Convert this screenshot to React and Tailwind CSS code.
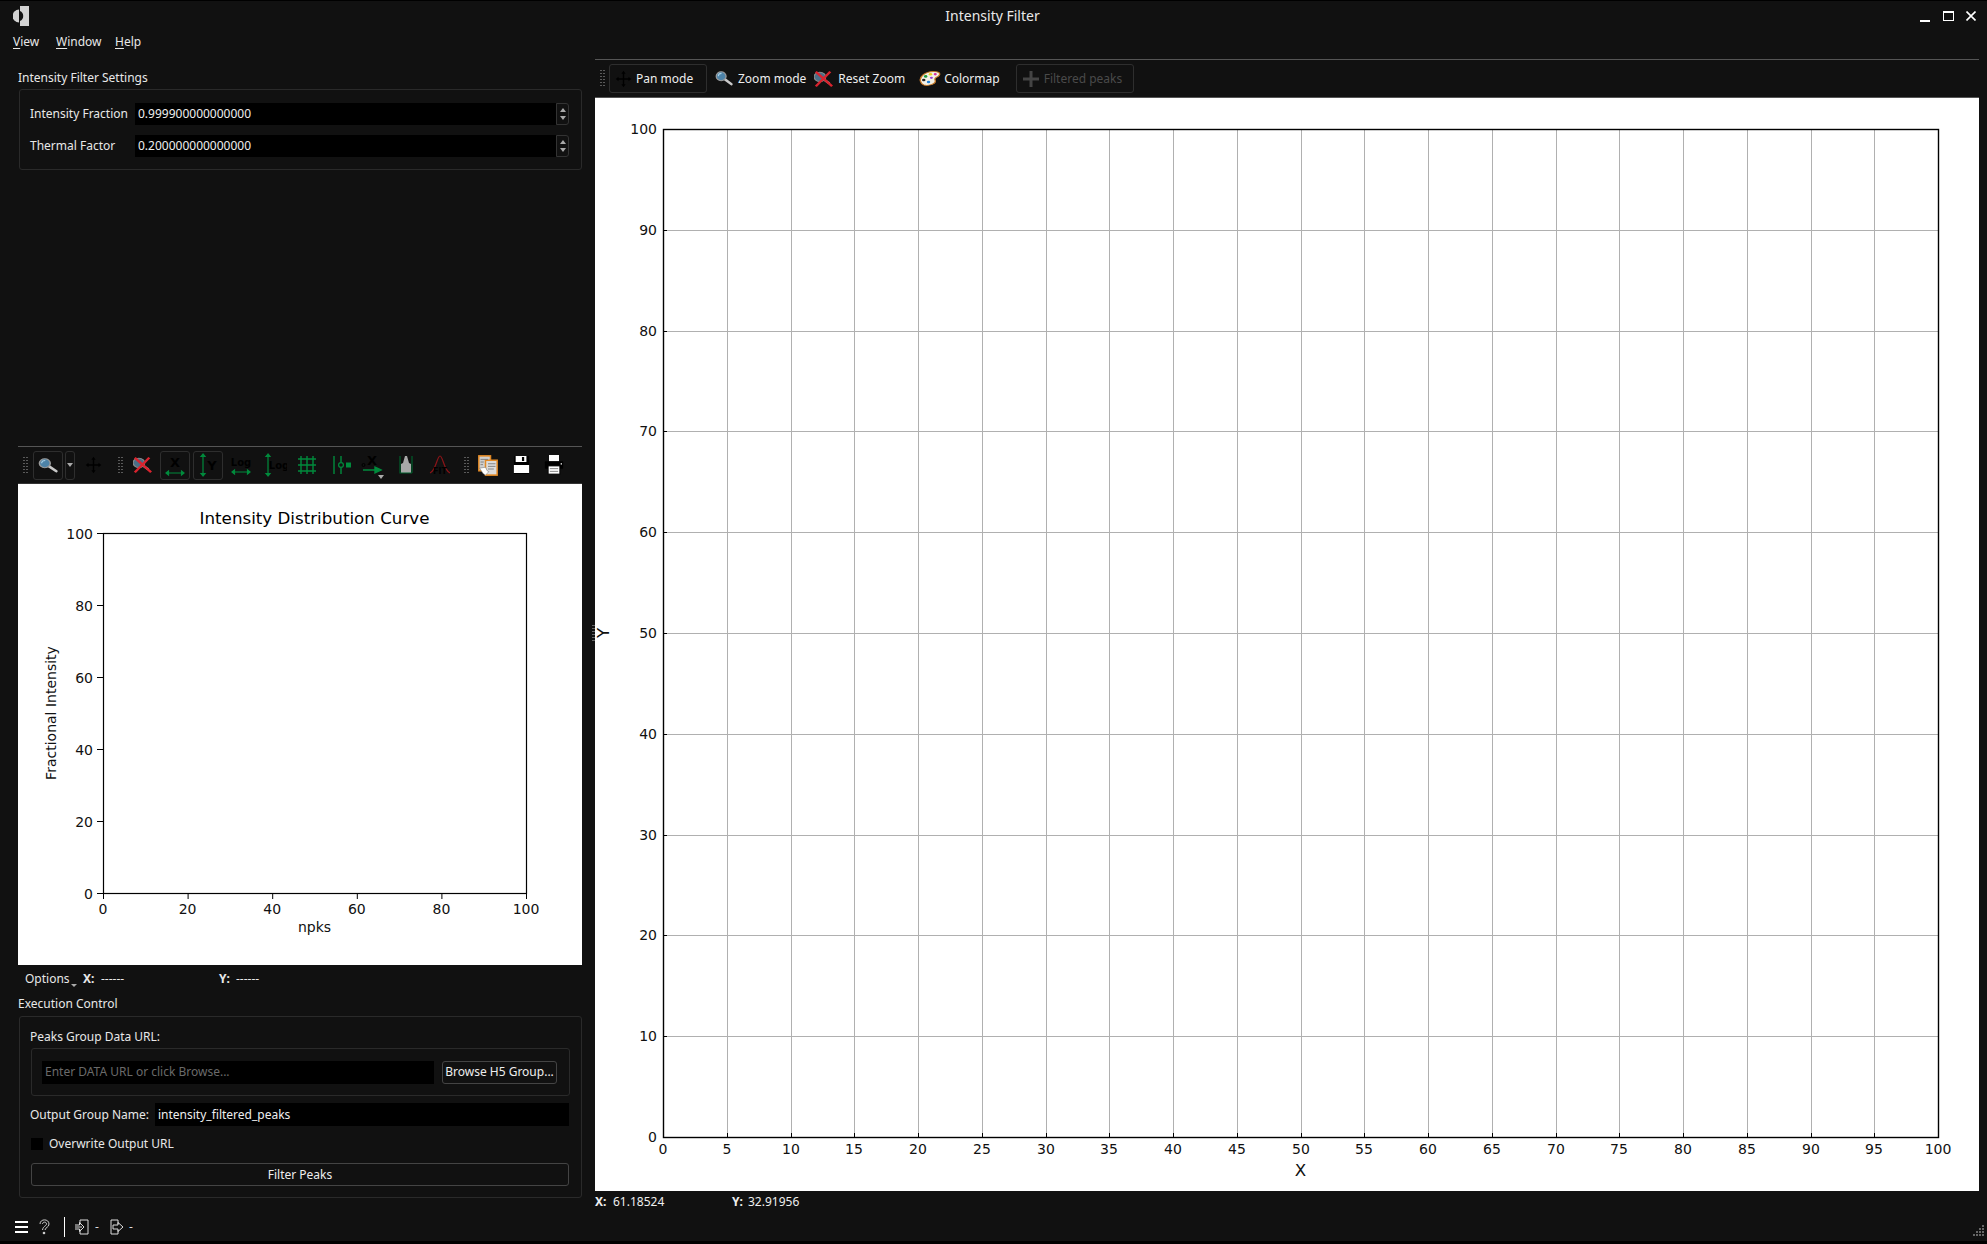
import React from "react";

const G = "#008a3c";

function Grip({ className = "" }) {
  return (
    <div className={"grid grid-cols-2 gap-px w-[5px] shrink-0 " + className}>
      {Array.from({ length: 12 }).map((_, i) => (
        <div key={i} className="w-[2px] h-[1px] mb-[1px] bg-[#5a5a5a]" />
      ))}
    </div>
  );
}

function Svg({ w = 24, h = 24, vb = "0 0 24 24", children }) {
  return (
    <svg width={w} height={h} viewBox={vb} preserveAspectRatio="none" className="block shrink-0">
      {children}
    </svg>
  );
}

function Lens() {
  return (
    <>
      <path d="M13 12 L21 18.5" stroke="#c9c9c9" strokeWidth="3.2" strokeLinecap="round" />
      <circle cx="8.5" cy="8" r="6" fill="#4d83a8" stroke="#9a9a9a" strokeWidth="1.6" />
      <path d="M5 8 A4 4 0 0 1 9 4.2" stroke="#a9d0e6" strokeWidth="1.4" fill="none" />
    </>
  );
}

const Magnifier = ({ w = 20, h = 15 }) => (
  <Svg w={w} h={h} vb="1 1 22 20">
    <Lens />
  </Svg>
);

const ResetZoom = ({ w = 19, h = 16 }) => (
  <Svg w={w} h={h} vb="2 1 21 22">
    <path d="M12 12 L19 18" stroke="#9a9a9a" strokeWidth="3" />
    <circle cx="8.5" cy="9" r="6.4" fill="#4a6f88" stroke="#8a8a8a" strokeWidth="1.4" />
    <path d="M4 2 L22 22 M20 2 L4 22" stroke="#d9232e" strokeWidth="2.8" />
  </Svg>
);

const Pan = ({ w = 17, h = 18 }) => (
  <Svg w={w} h={h}>
    <path d="M12 1 L15 5 H13 V11 H19 V9 L23 12 L19 15 V13 H13 V19 H15 L12 23 L9 19 H11 V13 H5 V15 L1 12 L5 9 V11 H11 V5 H9 Z" fill="#000" />
  </Svg>
);

const Palette = () => (
  <Svg w={23} h={17}>
    <path d="M3 17 C0 10 8 2 16 2 C23 2 24 6 21 9 C18 11 17 12 18 15 C19 20 10 23 6 21 C4.5 20 3.5 19 3 17 Z" fill="#f4f1e6" stroke="#c87a28" strokeWidth="1.4" />
    <circle cx="8" cy="9" r="1.8" fill="#1d9a3c" />
    <circle cx="13" cy="6" r="1.8" fill="#e8d21f" />
    <circle cx="18" cy="6" r="1.6" fill="#d32ea0" />
    <circle cx="6" cy="14" r="1.8" fill="#222" />
    <circle cx="11" cy="17" r="1.8" fill="#1f7fd6" />
    <circle cx="14" cy="11" r="1.6" fill="#9a3fd0" />
  </Svg>
);

const ArrowH = ({ y = 19, x1 = 3, x2 = 21 }) => (
  <path d={`M${x1} ${y} H${x2} M${x1} ${y} l2.5 -2 v4 Z M${x2} ${y} l-2.5 -2 v4 Z`} stroke={G} fill={G} strokeWidth="1.2" />
);
const ArrowV = ({ x = 8, y1 = 1, y2 = 23 }) => (
  <path d={`M${x} ${y1} V${y2} M${x} ${y1} l-2 2.5 h4 Z M${x} ${y2} l-2 -2.5 h4 Z`} stroke={G} fill={G} strokeWidth="1.2" />
);

const IconX = () => (
  <Svg w={24} h={24}>
    <text x="12" y="14" textAnchor="middle" className="font-['DejaVu_Sans'] font-bold text-[13px]" fill="#000">X</text>
    <ArrowH y={20} />
  </Svg>
);
const IconY = () => (
  <Svg w={24} h={24}>
    <ArrowV x={7} />
    <text x="16" y="17" textAnchor="middle" className="font-['DejaVu_Sans'] font-bold text-[13px]" fill="#000">Y</text>
  </Svg>
);
const IconLogX = () => (
  <Svg w={24} h={24}>
    <text x="12" y="13" textAnchor="middle" className="font-['DejaVu_Sans'] font-bold text-[10px]" fill="#000">Log</text>
    <ArrowH y={19} />
  </Svg>
);
const IconLogY = () => (
  <Svg w={24} h={24}>
    <ArrowV x={5} />
    <text x="16" y="16" textAnchor="middle" className="font-['DejaVu_Sans'] font-bold text-[10px]" fill="#000">Log</text>
  </Svg>
);
const IconGrid = () => (
  <Svg w={24} h={24}>
    <path d="M6 3 V21 M12 3 V21 M18 3 V21 M3 6 H21 M3 12 H21 M3 18 H21" stroke={G} strokeWidth="1.4" />
  </Svg>
);
const IconCurve = () => (
  <Svg w={24} h={24}>
    <path d="M4 3 V21 M11 3 V9 M11 15 V21" stroke={G} strokeWidth="1.4" />
    <circle cx="11" cy="12" r="2.4" fill="none" stroke={G} strokeWidth="1.2" />
    <rect x="16" y="9.5" width="5" height="5" fill={G} />
  </Svg>
);
const IconXArrow = () => (
  <div className="relative">
    <Svg w={24} h={24}>
      <circle cx="3.5" cy="12" r="1.5" fill="none" stroke="#000" />
      <text x="12" y="12" textAnchor="middle" className="font-['DejaVu_Sans'] font-bold text-[13px]" fill="#000">X</text>
      <path d="M3 17 H16 M21 17 L15 14.2 V19.8 Z" stroke={G} fill={G} strokeWidth="1.4" />
    </Svg>
    <div className="absolute left-[18px] top-[22px] w-0 h-0 border-l-[3px] border-r-[3px] border-t-[4px] border-l-transparent border-r-transparent border-t-[#aaa]" />
  </div>
);
const IconHist = () => (
  <Svg w={24} h={24}>
    <path d="M7 20 L7 11 L9 10 L11 3 L13 3 L15 10 L17 11 L17 20 Z" fill="#a8a8a8" />
    <path d="M6 3 V20 H18 M18 3 V20" stroke="#005f2c" strokeWidth="1.2" fill="none" />
  </Svg>
);
const IconFit = () => (
  <Svg w={24} h={24}>
    <path d="M2 20 C8 18 9 3 12 3 C15 3 16 18 22 20" stroke="#8c1418" strokeWidth="1.2" fill="none" />
    <text x="12" y="21" textAnchor="middle" className="font-['DejaVu_Sans'] font-bold text-[8px]" fill="#000">FIT</text>
  </Svg>
);
const IconCopy = () => (
  <Svg w={20} h={21}>
    <rect x="1" y="1" width="14" height="17" fill="#cfcfcf" stroke="#e28a26" strokeWidth="1.8" />
    <rect x="9" y="6" width="14" height="17" fill="#dcdcdc" stroke="#e28a26" strokeWidth="1.8" />
    <path d="M3 5 H12 M3 8 H7 M3 11 H6 M12 10 H21 M12 13 H21 M12 16 H19" stroke="#777" strokeWidth="1" />
    <path d="M2 15 L9 14 L11 18 L13 19 L9 23 L6 21 Z" fill="#fff" stroke="#555" strokeWidth="0.5" />
  </Svg>
);
const IconSave = () => (
  <Svg w={17} h={20} vb="0 0 19 20">
    <rect x="1" y="1" width="17" height="18" fill="#000" />
    <rect x="3" y="1" width="12" height="6" fill="#fff" />
    <rect x="10" y="2" width="2.5" height="4" fill="#000" />
    <rect x="1" y="10" width="17" height="8" fill="#fff" />
  </Svg>
);
const IconPrint = () => (
  <Svg w={20} h={20} vb="0 0 24 22">
    <rect x="6" y="0" width="12" height="7" fill="#fff" />
    <rect x="1" y="7" width="22" height="8" rx="1" fill="#000" />
    <rect x="20" y="9" width="1.5" height="1.5" fill="#fff" />
    <rect x="5" y="12" width="14" height="9" fill="#fff" stroke="#000" />
    <path d="M7 15 H17 M7 18 H17" stroke="#777" />
  </Svg>
);

function ToolBtn({ children, className = "" }) {
  return (
    <div className={"w-[30px] h-[29px] flex items-center justify-center shrink-0 border border-[#2e2e2e] rounded-[3px] " + className}>
      {children}
    </div>
  );
}

function Cell({ children, className = "" }) {
  return <div className={"w-[24px] h-[29px] flex items-center justify-center shrink-0 " + className}>{children}</div>;
}

function LeftToolbar() {
  return (
    <div className="flex items-center h-[38px] border-t border-[#555] border-b border-b-[#333]">
      <Grip className="ml-[5px]" />
      <ToolBtn className="ml-[5px]"><Magnifier /></ToolBtn>
      <div className="ml-[2px] w-[10px] h-[29px] border border-[#2e2e2e] rounded-[3px] flex items-center justify-center shrink-0">
        <div className="w-0 h-0 border-l-[3px] border-r-[3px] border-t-[4px] border-l-transparent border-r-transparent border-t-[#aaa]" />
      </div>
      <Cell className="ml-[6px]"><Pan /></Cell>
      <Grip className="ml-[13px]" />
      <Cell className="ml-[7px]"><ResetZoom /></Cell>
      <ToolBtn className="ml-[6px]"><IconX /></ToolBtn>
      <ToolBtn className="ml-[3px]"><IconY /></ToolBtn>
      <Cell className="ml-[6px]"><IconLogX /></Cell>
      <Cell className="ml-[10px]"><IconLogY /></Cell>
      <Cell className="ml-[8px]"><IconGrid /></Cell>
      <Cell className="ml-[11px]"><IconCurve /></Cell>
      <Cell className="ml-[6px]"><IconXArrow /></Cell>
      <Cell className="ml-[10px]"><IconHist /></Cell>
      <Cell className="ml-[10px]"><IconFit /></Cell>
      <Grip className="ml-[12px]" />
      <Cell className="ml-[7px]"><IconCopy /></Cell>
      <Cell className="ml-[9px]"><IconSave /></Cell>
      <Cell className="ml-[9px]"><IconPrint /></Cell>
    </div>
  );
}

function SpinField({ label, value }) {
  return (
    <div className="flex items-center h-[22px]">
      <div className="w-[105px] shrink-0">{label}</div>
      <div className="flex-1 h-[22px] bg-black px-[3px] flex items-center text-[#eee]">{value}</div>
      <div className="w-[13px] h-[22px] border border-[#333] rounded-r-[3px] flex flex-col items-center justify-center gap-[4px]">
        <div className="w-0 h-0 border-l-[3.5px] border-r-[3.5px] border-b-[4px] border-l-transparent border-r-transparent border-b-[#aaa]" />
        <div className="w-0 h-0 border-l-[3.5px] border-r-[3.5px] border-t-[4px] border-l-transparent border-r-transparent border-t-[#aaa]" />
      </div>
    </div>
  );
}

const tickClass = "font-['DejaVu_Sans'] text-[14px]";

function SmallChart() {
  const L = 85, R = 508, T = 49, B = 409;
  const vals = [0, 20, 40, 60, 80, 100];
  const px = (v) => L + ((R - L) * v) / 100;
  const py = (v) => B - ((B - T) * v) / 100;
  return (
    <svg width="564" height="481" viewBox="0 0 564 481" className="block">
      <text x={(L + R) / 2} y="40" textAnchor="middle" className="font-['DejaVu_Sans'] text-[16.7px]" fill="#000">Intensity Distribution Curve</text>
      <rect x={L + 0.5} y={T + 0.5} width={R - L} height={B - T} fill="none" stroke="#000" strokeWidth="1.2" />
      {vals.map((v) => (
        <g key={v}>
          <line x1={px(v) + 0.5} x2={px(v) + 0.5} y1={B} y2={B + 6} stroke="#000" strokeWidth="1" />
          <line x1={L - 6} x2={L} y1={py(v) + 0.5} y2={py(v) + 0.5} stroke="#000" strokeWidth="1" />
          <text x={px(v)} y={B + 21} textAnchor="middle" className={tickClass} fill="#111">{v}</text>
          <text x={L - 10} y={py(v) + 5.5} textAnchor="end" className={tickClass} fill="#111">{v}</text>
        </g>
      ))}
      <text x={(L + R) / 2} y="448" textAnchor="middle" className={tickClass} fill="#111">npks</text>
      <text transform="translate(38 229) rotate(-90)" textAnchor="middle" className={tickClass} fill="#111">Fractional Intensity</text>
    </svg>
  );
}

function MainChart() {
  const L = 68, R = 1343, T = 31, B = 1039;
  const xs = Array.from({ length: 21 }, (_, i) => i * 5);
  const ys = Array.from({ length: 11 }, (_, i) => i * 10);
  const px = (v) => Math.round(L + ((R - L) * v) / 100);
  const py = (v) => Math.round(B - ((B - T) * v) / 100);
  return (
    <svg width="1384" height="1093" viewBox="0 0 1384 1093" className="block">
      {xs.map((v) => (
        <g key={v}>
          <line x1={px(v) + 0.5} x2={px(v) + 0.5} y1={T} y2={B} stroke="#b0b0b0" strokeWidth="1" />
          <line x1={px(v) + 0.5} x2={px(v) + 0.5} y1={B - 4} y2={B} stroke="#000" strokeWidth="1" />
          <text x={px(v)} y={B + 17} textAnchor="middle" className={tickClass} fill="#111">{v}</text>
        </g>
      ))}
      {ys.map((v) => (
        <g key={v}>
          <line x1={L} x2={R} y1={py(v) + 0.5} y2={py(v) + 0.5} stroke="#b0b0b0" strokeWidth="1" />
          <line x1={L} x2={L + 4} y1={py(v) + 0.5} y2={py(v) + 0.5} stroke="#000" strokeWidth="1" />
          <text x={L - 6} y={py(v) + 5} textAnchor="end" className={tickClass} fill="#111">{v}</text>
        </g>
      ))}
      <rect x={L + 0.5} y={T + 0.5} width={R - L} height={B - T} fill="none" stroke="#000" strokeWidth="1.4" />
      <text x={(L + R) / 2} y={B + 39} textAnchor="middle" className="font-['DejaVu_Sans'] text-[16.7px]" fill="#111">X</text>
      <text transform={`translate(14 ${(T + B) / 2}) rotate(-90)`} textAnchor="middle" className="font-['DejaVu_Sans'] text-[16.7px]" fill="#111">Y</text>
    </svg>
  );
}

function LeftPanel() {
  return (
    <div className="w-[564px] ml-[18px] pb-[15px] flex flex-col shrink-0">
      <div className="mt-[16px] h-[18px] leading-[18px] mb-[2px]">Intensity Filter Settings</div>
      <div className="ml-[1px] h-[81px] border border-[#2a2a2a] rounded-[3px] pl-[10px] pr-[12px] pt-[13px] flex flex-col gap-[10px]">
        <SpinField label="Intensity Fraction" value="0.999900000000000" />
        <SpinField label="Thermal Factor" value="0.200000000000000" />
      </div>
      <div className="flex-1" />
      <LeftToolbar />
      <div className="h-[481px] bg-white">
        <SmallChart />
      </div>
      <div className="h-[27px] flex items-center">
        <div className="ml-[7px] w-[58px] relative">
          Options
          <div className="absolute left-[46px] top-[14px] w-0 h-0 border-l-[3px] border-r-[3px] border-t-[3px] border-l-transparent border-r-transparent border-t-[#aaa]" />
        </div>
        <div className="w-[18px] font-bold">X:</div>
        <div className="w-[118px]">------</div>
        <div className="w-[17px] font-bold">Y:</div>
        <div>------</div>
      </div>
      <div className="h-[24px] leading-[24px]">Execution Control</div>
      <div className="ml-[1px] h-[182px] border border-[#2a2a2a] rounded-[3px] pl-[10px] pr-[12px] flex flex-col">
        <div className="h-[18px] leading-[18px] mt-[11px]">Peaks Group Data URL:</div>
        <div className="mt-[2px] ml-[1px] h-[48px] border border-[#2a2a2a] rounded-[3px] flex items-center pl-[10px] pr-[12px] -mr-[1px]">
          <div className="w-[392px] h-[23px] bg-black flex items-center px-[3px] text-[#6a6a6a]">Enter DATA URL or click Browse...</div>
          <div className="ml-[8px] flex-1 h-[23px] border border-[#444] rounded-[3px] flex items-center justify-center text-[#eee] whitespace-nowrap">Browse H5 Group...</div>
        </div>
        <div className="mt-[7px] h-[23px] flex items-center">
          <div className="w-[125px] shrink-0">Output Group Name:</div>
          <div className="flex-1 h-[23px] bg-black flex items-center px-[3px] text-[#eee]">intensity_filtered_peaks</div>
        </div>
        <div className="mt-[12px] h-[12px] flex items-center">
          <div className="ml-[1px] w-[12px] h-[12px] bg-black shrink-0" />
          <div className="ml-[6px]">Overwrite Output URL</div>
        </div>
        <div className="mt-[13px] ml-[1px] h-[23px] border border-[#444] rounded-[3px] flex items-center justify-center text-[#eee]">Filter Peaks</div>
      </div>
    </div>
  );
}

function TopButton({ icon, label, className = "", labelClass = "", disabled }) {
  return (
    <div className={"h-[29px] flex items-center shrink-0 " + (disabled ? "text-[#4a4a4a] " : "text-[#eee] ") + className}>
      {icon}
      <span className={labelClass}>{label}</span>
    </div>
  );
}

function RightPanel() {
  return (
    <div className="w-[1384px] flex flex-col shrink-0">
      <div className="mt-[6px] border-t border-[#555] h-[39px] flex items-center border-b border-b-[#555]">
        <Grip className="ml-[5px]" />
        <TopButton className="ml-[4px] w-[98px] pl-[5px] border border-[#2e2e2e] rounded-[3px]" labelClass="ml-[4px]" icon={<Pan w={17} h={18} />} label="Pan mode" />
        <TopButton className="ml-[8px]" labelClass="ml-[5px]" icon={<Magnifier w={18} h={15} />} label="Zoom mode" />
        <TopButton className="ml-[8px]" labelClass="ml-[5px]" icon={<ResetZoom w={19} h={16} />} label="Reset Zoom" />
        <TopButton className="ml-[13px]" labelClass="ml-[3px]" icon={<Palette />} label="Colormap" />
        <TopButton
          className="ml-[16px] w-[118px] pl-[5px] border border-[#2e2e2e] rounded-[3px]"
          labelClass="ml-[4px]"
          disabled
          icon={
            <Svg w={18} h={18} vb="0 0 18 18">
              <path d="M9 1 V17 M1 9 H17" stroke="#444" strokeWidth="3" />
            </Svg>
          }
          label="Filtered peaks"
        />
      </div>
      <div className="h-[1093px] bg-white">
        <MainChart />
      </div>
      <div className="flex items-center flex-1 text-[#eee]">
        <div className="w-[18px] font-bold">X:</div>
        <div className="w-[119px]">61.18524</div>
        <div className="w-[16px] font-bold">Y:</div>
        <div>32.91956</div>
      </div>
    </div>
  );
}

function StatusBar() {
  return (
    <div className="h-[28px] flex items-center relative">
      <div className="ml-[15px] w-[13px] flex flex-col gap-[3px]">
        <div className="h-[2px] bg-white" />
        <div className="h-[2px] bg-white" />
        <div className="h-[2px] bg-white" />
      </div>
      <div className="ml-[11px]">
        <Svg w={11} h={16} vb="0 0 11 16">
          <path d="M1 5 C1 -0.5 10 -0.5 10 5 C10 8.5 6.5 8 6 11 M3.5 5 C3.5 2.5 7.5 2.5 7.5 5 C7.5 7 4 7 3.5 11" stroke="#ccc" strokeWidth="1" fill="none" />
          <circle cx="5" cy="14" r="1.3" fill="#ccc" />
        </Svg>
      </div>
      <div className="ml-[14px] w-px h-[20px] bg-white" />
      <div className="ml-[10px]">
        <Svg w={14} h={16} vb="0 0 14 16">
          <path d="M5 1 H13 V15 H5 V10.5 M5 5.5 V1" stroke="#ddd" fill="none" />
          <path d="M0 8 H7 M0 6 H4.5 V3.5 L9 8 L4.5 12.5 V10 H0" stroke="#ddd" fill="none" />
        </Svg>
      </div>
      <div className="ml-[6px] text-[#ddd]">-</div>
      <div className="ml-[11px]">
        <Svg w={14} h={16} vb="0 0 14 16">
          <path d="M8 5 V1 H1 V15 H8 V11" stroke="#ddd" fill="none" />
          <path d="M3 6 H8 V3.5 L13 8 L8 12.5 V10 H3 Z" stroke="#ddd" fill="none" />
        </Svg>
      </div>
      <div className="ml-[5px] text-[#ddd]">-</div>
      <div className="absolute right-[3px] bottom-[4px]">
        <Svg w={12} h={12} vb="0 0 12 12">
          {[[10, 0], [7, 3], [10, 3], [4, 6], [7, 6], [10, 6], [1, 9], [4, 9], [7, 9], [10, 9]].map(([x, y], i) => (
            <rect key={i} x={x} y={y} width="2" height="2" fill="#666" />
          ))}
        </Svg>
      </div>
    </div>
  );
}

export default function App() {
  return (
    <div className="w-[1987px] h-[1244px] bg-[#111111] text-[#e8e8e8] font-['Noto_Sans'] text-[12px] flex flex-col overflow-hidden border-t border-black border-b-[3px] border-b-black">
      <div className="h-[30px] flex items-center relative shrink-0">
        <div className="ml-[13px]">
          <Svg w={16} h={20} vb="0 0 16 20">
            <path d="M7 0 H16 V20 H7 V15 A5.5 5.5 0 0 0 7 5 Z" fill="#d2d2d2" />
            <path d="M6 3.5 V16.5 A6.5 6.5 0 0 1 6 3.5 Z" fill="#d2d2d2" />
          </Svg>
        </div>
        <div className="flex-1 text-center text-[14px] text-[#e8e8e8] ml-[36px] mb-[2px]">Intensity Filter</div>
        <div className="flex items-center mr-[11px]">
          <div className="w-[10px] h-[2px] bg-white mt-[9px]" />
          <div className="ml-[13px] w-[11px] h-[10px] border border-white border-t-2" />
          <div className="ml-[12px]">
            <Svg w={10} h={10} vb="0 0 10 10">
              <path d="M0.5 0.5 L9.5 9.5 M9.5 0.5 L0.5 9.5" stroke="#fff" strokeWidth="1.6" />
            </Svg>
          </div>
        </div>
      </div>
      <div className="h-[22px] flex items-center shrink-0">
        <div className="ml-[13px] w-[43px]"><span className="underline underline-offset-2">V</span>iew</div>
        <div className="w-[59px]"><span className="underline underline-offset-2">W</span>indow</div>
        <div><span className="underline underline-offset-2">H</span>elp</div>
      </div>
      <div className="flex flex-1 min-h-0">
        <LeftPanel />
        <div className="ml-[10px] w-[3px] flex items-center shrink-0">
          <div className="w-[3px] h-[17px] bg-[repeating-linear-gradient(180deg,#666_0px,#666_1px,transparent_1px,transparent_3px)]" />
        </div>
        <RightPanel />
      </div>
      <StatusBar />
    </div>
  );
}
